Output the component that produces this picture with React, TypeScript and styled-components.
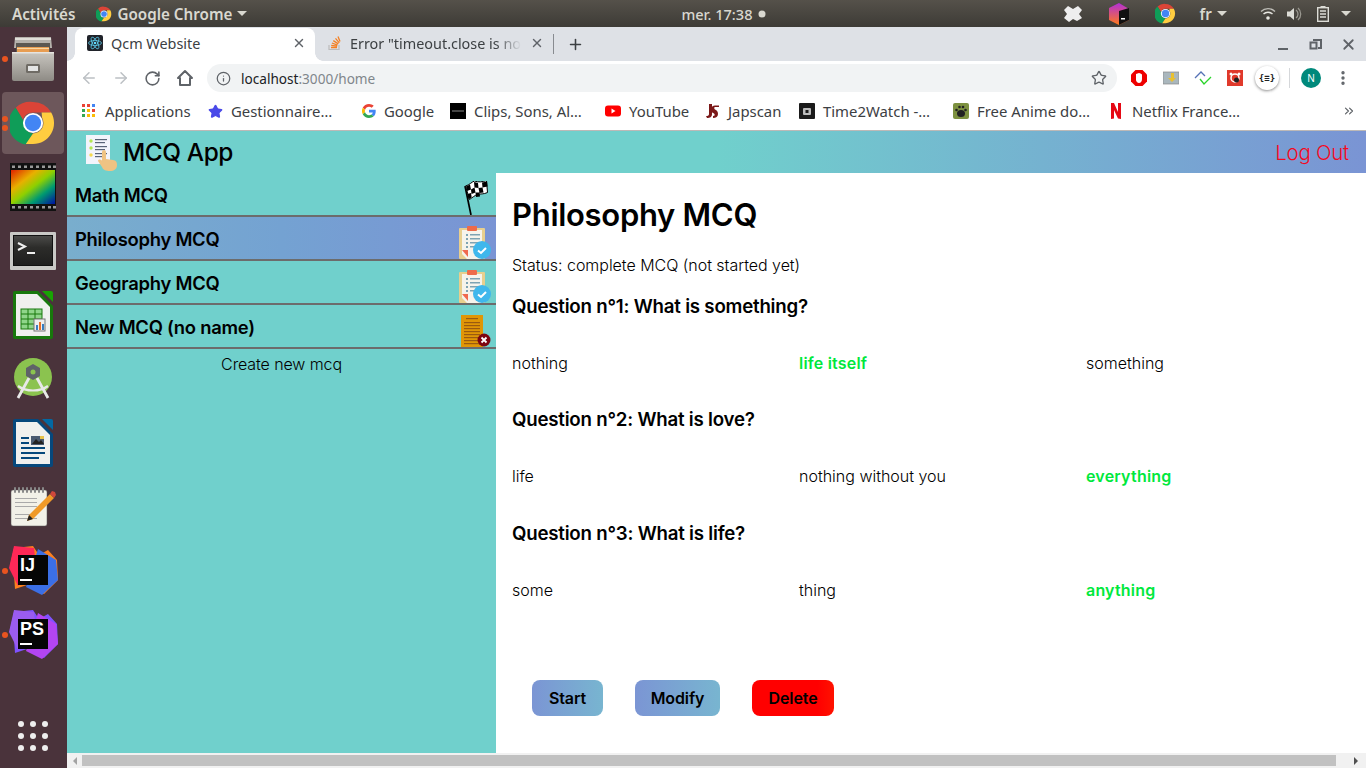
import React from "react";
import styled, { createGlobalStyle } from "styled-components";
import { ArrowLeft, ArrowRight, RotateCw, Info, Star, EllipsisVertical, X, Plus, ChevronsRight } from "lucide-react";

const Global = createGlobalStyle`
  html, body { margin: 0; padding: 0; width: 1366px; height: 768px; overflow: hidden; background: #fff; }
  * { box-sizing: border-box; }
`;
const UI = `"Noto Sans", "Open Sans", sans-serif`;
const APP = `Inter, "Noto Sans", sans-serif`;

const Screen = styled.div`display: flex; flex-direction: column; width: 1366px; height: 768px;`;
const TopBar = styled.header`
  height: 27px; flex: none; display: flex; align-items: center;
  background: linear-gradient(#55514a, #3d3b36);
  color: #d9d8d0; font: 600 15.2px ${UI};
`;
const TopItem = styled.div<{ $x: number }>`margin-left: ${p => p.$x}px; display: flex; align-items: center; gap: 5px; white-space: nowrap;`;
const Clock = styled(TopItem)`font-weight: 500; font-size: 14.6px;`;
const Caret = styled.span`width: 0; height: 0; border-left: 5px solid transparent; border-right: 5px solid transparent; border-top: 5px solid #d9d8d0;`;
const Desktop = styled.div`flex: 1; display: flex; min-height: 0;`;
const Dock = styled.nav`width: 67px; flex: none; background: #4a333b; display: flex; flex-direction: column; padding-bottom: 17px;`;
const DockSlot = styled.div<{ $active?: boolean }>`
  position: relative; height: 64px; flex: none; display: flex; align-items: center; justify-content: center; padding-right: 1px;
  &::before { content: ""; position: absolute; left: 2px; top: 1px; width: 62px; height: 62px; border-radius: 4px; background: ${p => (p.$active ? "#6d575b" : "transparent")}; }
  svg { position: relative; }
`;
const RunDot = styled.i<{ $y: number }>`position: absolute; left: 2px; top: ${p => p.$y}px; width: 6px; height: 6px; border-radius: 50%; background: #e95420;`;
const DockGrid = styled.div`margin-top: auto; margin-left: 18px; width: 30px; display: grid; grid-template-columns: repeat(3, 6px); gap: 6px;`;
const GridDot = styled.i`width: 6px; height: 6px; border-radius: 50%; background: #eee;`;

const Window = styled.div`flex: 1; min-width: 0; display: flex; flex-direction: column;`;
const TabStrip = styled.div`height: 34px; flex: none; background: #dee1e6; display: flex; align-items: flex-end; padding-left: 8px; color: #3c4043; font: 14.4px ${UI};`;
const ActiveTab = styled.div`
  position: relative; width: 240px; height: 33px; background: #fff; border-radius: 8px 8px 0 0; display: flex; align-items: center; padding: 0 9px 3px 12px; gap: 8px;
  &::before, &::after { content: ""; position: absolute; bottom: 0; width: 8px; height: 8px; }
  &::before { left: -8px; background: radial-gradient(circle at 0 0, #dee1e6 7.5px, #fff 8px); }
  &::after { right: -8px; background: radial-gradient(circle at 100% 0, #dee1e6 7.5px, #fff 8px); }
`;
const IdleTab = styled.div`width: 238px; height: 33px; display: flex; align-items: center; padding: 0 9px 3px 12px; gap: 7px;`;
const TabTitle = styled.span<{ $fade?: boolean }>`
  flex: 1; white-space: nowrap; min-width: 0;
  ${p => p.$fade ? "-webkit-mask-image: linear-gradient(90deg,#000 84%,transparent 99%);" : ""}
`;
const TabSep = styled.div`width: 1px; height: 20px; background: #888b90; margin-bottom: 7px;`;
const NewTab = styled.div`margin: 0 0 7px 13px; height: 20px; display: flex; align-items: center;`;
const WinControls = styled.div`margin-left: auto; margin-bottom: 7px; display: flex; gap: 18px; padding-right: 9px; height: 20px; align-items: center;`;
const Toolbar = styled.div`height: 34px; flex: none; background: #fff; display: flex; align-items: center; padding-left: 13px;`;
const NavBtn = styled.span`width: 32px; display: flex; justify-content: flex-start; color: #5f6368;`;
const Omnibox = styled.div`
  width: 910px; height: 28px; margin-left: -1px; border-radius: 14px; background: #f1f3f4; display: flex; align-items: center;
  padding: 0 10px 0 9px; font: 13.6px ${UI}; color: #80868b;
`;
const Host = styled.span`color: #202124;`;
const Url = styled.span`margin-left: 10px; flex: 1;`;
const Extensions = styled.div`display: flex; align-items: center; margin-left: 6px;`;
const ExtSlot = styled.span<{ $gap?: number }>`width: 32px; height: 28px; margin-left: ${p => p.$gap ?? 0}px; display: flex; align-items: center; justify-content: center;`;
const ExtRound = styled.span`width: 24px; height: 24px; border-radius: 50%; background: #fff; box-shadow: 0 1px 3px rgba(0,0,0,.45); display: flex; align-items: center; justify-content: center; font: 700 9px "DejaVu Sans Mono", monospace; color: #222;`;
const ExtSep = styled.span`width: 1px; height: 20px; background: #d5d7da; margin: 0 11px 0 6px;`;
const Avatar = styled.span`width: 20px; height: 20px; border-radius: 50%; background: #00897b; color: #fff; font: 10px ${UI}; display: flex; align-items: center; justify-content: center;`;
const Bookmarks = styled.div`height: 36px; flex: none; background: #fff; border-bottom: 1px solid #bdb9b7; display: flex; align-items: center; padding: 0 0 3px 15px; font: 14.9px ${UI}; color: #3c4043;`;
const Bookmark = styled.div<{ $w: number }>`width: ${p => p.$w}px; flex: none; display: flex; align-items: center; gap: 8px; white-space: nowrap; & > svg { flex: none; }`;
const More = styled.span`margin-left: 86px; display: flex; color: #5f6368;`;

const Page = styled.main`flex: 1; min-height: 0; display: flex; flex-direction: column; font-family: ${APP}; color: #000;`;
const AppHeader = styled.div`height: 42px; flex: none; background: linear-gradient(90deg, #70d0cc 50%, #7a94d4 100%); display: flex; align-items: center; padding: 0 17px 0 18px;`;
const Brand = styled.div`font-size: 24.4px; font-weight: 500; margin-left: 2px; letter-spacing: -.4px;`;
const LogOut = styled.a`margin-left: auto; color: #f5091d; font-size: 20.4px; font-weight: 300; letter-spacing: -.2px;`;
const Body = styled.div`flex: 1; min-height: 0; display: flex;`;
const Sidebar = styled.aside`width: 429px; flex: none; background: #70d0cc; display: flex; flex-direction: column;`;
const Row = styled.div<{ $active?: boolean }>`
  height: 44px; flex: none; border-bottom: 2px solid #6c6c6c; display: flex; align-items: center; justify-content: space-between;
  padding: 2px 5px 0 8px; font-size: 18.4px; font-weight: 600; letter-spacing: -.25px;
  background: ${p => (p.$active ? "linear-gradient(90deg,#79aecd,#74a2d2 50%,#7a94d4)" : "transparent")};
`;
const RowIcon = styled.span<{ $shift?: number }>`display: flex; align-self: flex-end; height: 42px; align-items: flex-end; margin-right: ${p => p.$shift ?? 0}px;`;
const CreateLink = styled.div`text-align: center; font-size: 16px; font-weight: 300; margin-top: 5px; line-height: 20px; letter-spacing: -.1px;`;
const Content = styled.section`flex: 1; min-width: 0; background: #fff; padding: 0 16px;`;
const Title = styled.h1`font-size: 31px; font-weight: 600; margin: 22px 0 0; line-height: 40px; letter-spacing: -.3px;`;
const Status = styled.p`font-size: 16px; font-weight: 300; margin: 20px 0 0; line-height: 20px; letter-spacing: -.03px;`;
const Question = styled.h3<{ $gap: number }>`font-size: 18.7px; font-weight: 600; line-height: 24px; margin: ${p => p.$gap}px 0 0; letter-spacing: -.22px;`;
const Answers = styled.div`display: grid; grid-template-columns: repeat(3, 287px); margin-top: 34px; line-height: 20px;`;
const Answer = styled.span<{ $ok?: boolean }>`
  font-size: 16px; font-weight: ${p => (p.$ok ? 600 : 300)}; color: ${p => (p.$ok ? "#00e83c" : "#000")}; letter-spacing: ${p => (p.$ok ? ".2px" : "0")};
`;
const Actions = styled.div`display: flex; margin: 79.6px 0 0 20px; gap: 32px;`;
const Action = styled.button<{ $w: number; $danger?: boolean }>`
  width: ${p => p.$w}px; height: 36px; border: 0; border-radius: 8px; padding: 0; color: #000;
  font: 600 16px ${APP}; letter-spacing: -.1px;
  background: ${p => (p.$danger ? "linear-gradient(90deg,#f00,#f00 80%,#ff1200)" : "linear-gradient(90deg,#7b95d4,#78b5d0)")};
`;
const ScrollBar = styled.div`height: 15px; flex: none; background: #f1f1f1; display: flex; align-items: center; padding: 0 3px 0 0;`;
const ScrollThumb = styled.div`height: 11px; width: 1254px; background: #c1c1c1; margin-left: 0;`;
const ScrollArrow = styled.span<{ $dir: "l" | "r" }>`
  width: 15px; height: 15px; display: flex; align-items: center; justify-content: center;
  &::after { content: ""; border-top: 4px solid transparent; border-bottom: 4px solid transparent; ${p => (p.$dir === "l" ? "border-right: 4px solid #a3a3a3;" : "border-left: 4px solid #505050;")} }
`;
const ScrollEnd = styled.span`margin-left: auto; display: flex;`;

const Chrome = ({ s }: { s: number }) => (
  <svg width={s} height={s} viewBox="0 0 48 48">
    <path d="M24 2a22 22 0 0 1 19 11H24a11 11 0 0 0-10.5 7.5L6 8A22 22 0 0 1 24 2z" fill="#db4437" />
    <path d="M6 8l8.5 14.5A11 11 0 0 0 24 35l-7.500 11.500A22 22 0 0 1 6 8z" fill="#0f9d58" />
    <path d="M43 13a22 22 0 0 1-19 33h-7.500L24 35a11 11 0 0 0 9.500-16.500L33 13z" fill="#ffcd40" />
    <circle cx="24" cy="24" r="10.500" fill="#fff" /><circle cx="24" cy="24" r="8.500" fill="#4285f4" />
  </svg>
);
const Cabinet = () => (
  <svg width="42" height="44" viewBox="0 0 42 44">
    <defs><linearGradient id="cab" x1="0" y1="0" x2="0" y2="1"><stop offset="0" stopColor="#c9c6c0" /><stop offset="1" stopColor="#8e8b85" /></linearGradient></defs>
    <path d="M3 0h36l1 11H2z" fill="#b5b2ac" /><rect x="3" y="1" width="36" height="2" fill="#e0ded9" />
    <rect x="4" y="6" width="34" height="10" fill="#5b5852" />
    <rect x="5" y="10" width="32" height="5" fill="#e89d52" /><rect x="5" y="11" width="32" height="1" fill="#f7d7a2" />
    <path d="M0 15h42v27a2 2 0 0 1-2 2H2a2 2 0 0 1-2-2z" fill="url(#cab)" />
    <rect y="15" width="42" height="1.500" fill="#e6e4e0" />
    <rect x="14" y="27" width="14" height="9" rx="1.500" fill="#6f6b65" /><rect x="16" y="29" width="10" height="5" fill="#e4e4e4" />
  </svg>
);
const Film = () => (
  <svg width="46" height="48" viewBox="0 0 46 48">
    <defs><linearGradient id="rb" x1="0" y1="0" x2="1" y2="1">
      <stop offset="0" stopColor="#e02000" /><stop offset=".3" stopColor="#e8b000" /><stop offset=".5" stopColor="#8fd000" /><stop offset=".72" stopColor="#009a70" /><stop offset="1" stopColor="#0010a0" />
    </linearGradient></defs>
    <rect width="46" height="48" fill="#111" /><rect x="1" y="7" width="44" height="34" fill="url(#rb)" />
    {[2, 8, 14, 20, 26, 32, 38, 43].map(x => <React.Fragment key={x}><rect x={x} y="2.500" width="3" height="2.500" fill="#999" /><rect x={x} y="43" width="3" height="2.500" fill="#999" /></React.Fragment>)}
  </svg>
);
const Terminal = () => (
  <svg width="46" height="38" viewBox="0 0 46 38">
    <defs><linearGradient id="trm" x1="0" y1="0" x2="0" y2="1"><stop offset="0" stopColor="#4a4a48" /><stop offset=".4" stopColor="#2c2c2a" /><stop offset="1" stopColor="#1f1f1e" /></linearGradient></defs>
    <rect width="46" height="38" rx="1" fill="#c9c9c6" /><rect x="3" y="3" width="40" height="31" fill="#111" /><rect x="4" y="4" width="38" height="29" fill="url(#trm)" />
    <path d="M8 11l7 3.500-7 3.500" fill="none" stroke="#eee" strokeWidth="2" /><rect x="17" y="20" width="8" height="2" fill="#eee" />
  </svg>
);
const OfficeDoc = ({ a, b, children }: { a: string; b: string; children: React.ReactNode }) => (
  <svg width="40" height="48" viewBox="0 0 40 48">
    <path d="M2 0h23l15 15v31a2 2 0 0 1-2 2H2a2 2 0 0 1-2-2V2a2 2 0 0 1 2-2z" fill={a} />
    <path d="M29 0h9a2 2 0 0 1 2 2v9z" fill={b} />
    <path d="M3 3h21l13 13v29H3z" fill="#f0f0ee" />
    {children}
  </svg>
);
const Calc = () => (
  <OfficeDoc a="#18780c" b="#18a303">
    <rect x="8" y="18" width="21" height="20" fill="#8fd58a" stroke="#18780c" />
    <path d="M8 23h21M8 28h21M8 33h21M15 18v20M22 18v20" stroke="#18780c" /><rect x="21" y="28" width="11" height="12" fill="#eee" stroke="#777" />
    <rect x="23" y="34" width="2" height="5" fill="#3a7dc0" /><rect x="26" y="31" width="2" height="8" fill="#e8702a" /><rect x="29" y="33" width="2" height="6" fill="#3a7dc0" />
  </OfficeDoc>
);
const Writer = () => (
  <OfficeDoc a="#06487c" b="#0369a3">
    <rect x="8" y="18" width="8" height="2" fill="#06487c" /><rect x="8" y="23" width="8" height="2" fill="#06487c" /><rect x="8" y="28" width="24" height="2" fill="#06487c" /><rect x="8" y="33" width="24" height="2" fill="#06487c" /><rect x="8" y="38" width="18" height="2" fill="#06487c" />
    <rect x="18" y="17" width="13" height="9" fill="#4a5a70" /><path d="M19 25l4-5 3 3 2-2 3 4z" fill="#222" /><rect x="27" y="17" width="4" height="3" fill="#e8c24a" />
  </OfficeDoc>
);
const Android = () => (
  <svg width="40" height="42" viewBox="0 0 40 42">
    <circle cx="20" cy="19" r="19" fill="#8bc34f" />
    <path d="M20 6l7 4v8l-7 4-7-4v-8z" fill="#5f6368" /><circle cx="20" cy="14" r="2.500" fill="#8bc34f" />
    <path d="M16 20L5 40M24 20l11 20" stroke="#e8e8e8" strokeWidth="2.800" />
    <path d="M5 28c8 6 22 6 30 0" fill="none" stroke="#e8e8e8" strokeWidth="2.200" />
  </svg>
);
const Gedit = () => (
  <svg width="46" height="40" viewBox="0 0 46 40">
    <rect x="1" y="3" width="36" height="36" rx="2" fill="#f2f1e8" stroke="#555" strokeWidth=".5" />
    {[4, 8, 12, 16, 20, 24, 28, 32].map(x => <rect key={x} x={x} y="0" width="2" height="6" rx="1" fill="#888" />)}
    {[11, 15, 19, 27, 31].map(y => <rect key={y} x="5" y={y} width="22" height="1" fill="#aaa" />)}
    <path d="M19 28L40 7l4 4-21 21-6 2z" fill="#f09a28" /><path d="M40 7l2-3 3 1 1 3-2 3z" fill="#d0483c" /><path d="M17 34l2-6 4 4z" fill="#222" />
  </svg>
);
const Jet = ({ code, c1, c2, c3 }: { code: string; c1: string; c2: string; c3: string }) => (
  <svg width="50" height="50" viewBox="0 0 50 50">
    <path d="M6 2l19-2 6 9 9-5 9 10 1 20-14 14-17-9-12 4-1-14L2 20z" fill={c2} />
    <path d="M6 0l20 2 2 18-18 20L1 22z" fill={c1} />
    <path d="M30 3l18 11 2 20-16 15-16-8z" fill={c3} />
    <rect x="10" y="9" width="30" height="30" fill="#050505" />
    <text x="12" y="25" fill="#fff" fontFamily="Liberation Sans" fontWeight="700" fontSize="18">{code}</text>
    <rect x="12" y="33" width="12" height="2" fill="#fff" />
  </svg>
);

const ReactIco = () => (
  <svg width="16" height="16" viewBox="0 0 16 16"><rect width="16" height="16" rx="2" fill="#20232a" />
    <g fill="none" stroke="#61dafb" strokeWidth=".7"><ellipse cx="8" cy="8" rx="6.500" ry="2.500" /><ellipse cx="8" cy="8" rx="6.500" ry="2.500" transform="rotate(60 8 8)" /><ellipse cx="8" cy="8" rx="6.500" ry="2.500" transform="rotate(120 8 8)" /></g>
    <circle cx="8" cy="8" r="1.300" fill="#61dafb" /></svg>
);
const SO = () => (
  <svg width="16" height="16" viewBox="0 0 16 16"><path d="M2 10v4.500h10V10" fill="none" stroke="#bcbbbb" strokeWidth="1.200" />
    <path d="M4 12.500h6M4.200 10.400l6 .8M4.900 8l5.600 2.200M6.300 5.600l5 3.300M8.500 3.400l3.800 4.400M11 1.500l2 5" stroke="#f48024" strokeWidth="1.300" fill="none" /></svg>
);
const Apps = () => (
  <svg width="15" height="14" viewBox="0 0 15 14">
    {["#ea4335","#ea4335","#4285f4","#34a853","#fbbc05","#ea4335","#34a853","#fbbc05","#fbbc05"].map((c, i) => <rect key={i} x={(i % 3) * 5} y={Math.floor(i / 3) * 5} width="3" height="3" fill={c} />)}
  </svg>
);
const GLogo = () => (
  <svg width="14" height="14" viewBox="0 0 48 48"><path fill="#ea4335" d="M24 9.500c3.500 0 6.700 1.200 9.200 3.600l6.900-6.900C35.900 2.400 30.500 0 24 0 14.600 0 6.500 5.400 2.600 13.200l8 6.200C12.500 13.700 17.800 9.500 24 9.500z" /><path fill="#4285f4" d="M47 24.500c0-1.600-.2-3.100-.4-4.500H24v9h13c-.6 3-2.200 5.500-4.800 7.200l7.700 6C44.400 38 47 31.800 47 24.500z" /><path fill="#fbbc05" d="M10.600 28.600A14.500 14.500 0 0 1 10.600 19.400l-8-6.200a24 24 0 0 0 0 21.600z" /><path fill="#34a853" d="M24 48c6.500 0 11.900-2.100 15.900-5.800l-7.700-6c-2.200 1.400-4.900 2.300-8.200 2.300-6.200 0-11.500-4.200-13.400-9.900l-8 6.200C6.500 42.600 14.600 48 24 48z" /></svg>
);
const ClipsIco = () => <svg width="16" height="16" viewBox="0 0 16 16"><rect width="16" height="16" fill="#000" /><rect x="2" y="7.500" width="12" height="1" fill="#888" /></svg>;
const YT = () => <svg width="16" height="16" viewBox="0 0 16 16"><rect y="2.500" width="16" height="11" rx="3" fill="#f00" /><path d="M6.500 5.500l4 2.500-4 2.500z" fill="#fff" /></svg>;
const Jap = () => <svg width="16" height="16" viewBox="0 0 16 16"><path d="M5 1h3v10c0 3-2 4-5 4l-1-2c2 0 3-.5 3-2zM15 4h-4c-1 0-1 2 0 2.500 2 1 3 2 3 4.500s-2 4-5 4v-2c2 0 2-1.500 1-2.500-2-1-3-2-3-4 0-3 2-4 4-4h4z" fill="#7b1818" /></svg>;
const T2W = () => <svg width="16" height="16" viewBox="0 0 16 16"><rect width="16" height="16" rx="1" fill="#1a1a1a" /><rect x="4" y="5" width="8" height="7" rx="1" fill="#bbb" /><rect x="6.500" y="7" width="3" height="3" fill="#1a1a1a" /></svg>;
const Paw = () => <svg width="16" height="16" viewBox="0 0 16 16"><rect width="16" height="16" rx="2" fill="#7d9140" /><ellipse cx="8" cy="10.500" rx="4" ry="3.500" fill="#222" /><circle cx="3.500" cy="7" r="1.300" fill="#222" /><circle cx="6.500" cy="4" r="1.300" fill="#222" /><circle cx="10" cy="4" r="1.300" fill="#222" /><circle cx="12.500" cy="7" r="1.300" fill="#222" /></svg>;
const Netflix = () => <svg width="16" height="16" viewBox="0 0 16 16"><path d="M3 0h3l4 9V0h3v16l-3-.4L6 7v8.400L3 16z" fill="#e50914" /></svg>;

const HomeIco = () => <svg width="18" height="18" viewBox="0 0 18 18"><path d="M9 2L2 9h2v7h10V9h2z" fill="none" stroke="#5f6368" strokeWidth="2" strokeLinejoin="round" /></svg>;
const Restore = () => <svg width="13" height="16" viewBox="0 0 13 16"><path d="M4 4h8v8h-3" fill="none" stroke="#5f6368" strokeWidth="2" /><rect x="1.500" y="6.500" width="6" height="6" fill="none" stroke="#5f6368" strokeWidth="2" /></svg>;
const Minimize = () => <svg width="16" height="16" viewBox="0 0 16 16"><rect x="3" y="12" width="10" height="2" fill="#5f6368" /></svg>;
const AdBlock = () => <svg width="18" height="18" viewBox="0 0 18 18"><path d="M5.500 1h7L17 5.500v7L12.500 17h-7L1 12.500v-7z" fill="#e00" /><path d="M6 8V5l1.500-.5L9 4l1.500.5 1.500 1V10c0 2.500-1.500 4-3 4s-3-1.500-3-3z" fill="#fff" /></svg>;
const PicExt = () => <svg width="16" height="14" viewBox="0 0 16 14"><rect width="16" height="12" y="1" fill="#aab7bd" stroke="#888" strokeWidth=".7" /><path d="M8 2v5H5l4 4 4-4h-2V2z" fill="#e8c030" /></svg>;
const Chevs = () => <svg width="18" height="16" viewBox="0 0 18 16"><path d="M1 8l6-6 4 4" fill="none" stroke="#5572b5" strokeWidth="1.300" /><path d="M6 9l4 5 7-7" fill="none" stroke="#2bd42b" strokeWidth="1.300" /></svg>;
const RedExt = () => <svg width="16" height="16" viewBox="0 0 16 16"><rect width="16" height="16" fill="#e0392b" /><circle cx="8" cy="8" r="4" fill="none" stroke="#fff" strokeWidth="1.500" /><circle cx="4" cy="4" r="1.500" fill="#fff" /><circle cx="12" cy="4" r="1.500" fill="#fff" /><circle cx="9.500" cy="10" r="2.500" fill="#222" /></svg>;

const TrayX = () => <svg width="18" height="16" viewBox="0 0 18 16"><path d="M4 0l5 3 5-3 4 4-3 4 3 4-5 3-4-2-4 3-5-4 3-4-3-4z" fill="#eee" /></svg>;
const TrayBox = () => <svg width="20" height="22" viewBox="0 0 20 22"><defs><linearGradient id="tb" x1="0" y1="0" x2="0" y2="1"><stop offset="0" stopColor="#b22fd8" /><stop offset="1" stopColor="#ff7a1a" /></linearGradient></defs><path d="M10 0l10 6v11l-10 5-10-5V5z" fill="url(#tb)" /><path d="M10 8l10-3v12l-10 5z" fill="#111" /><rect x="12" y="15" width="4" height="1.500" fill="#fff" /></svg>;
const Wifi = () => <svg width="16" height="14" viewBox="0 0 16 14" fill="none" stroke="#bdbcb6" strokeWidth="1.400"><path d="M1 4.500a10 10 0 0 1 14 0" /><path d="M3.500 7a6.500 6.500 0 0 1 9 0" stroke="#e8e8e2" /><circle cx="8" cy="11" r="1.800" fill="#e8e8e2" stroke="none" /></svg>;
const Volume = () => <svg width="16" height="14" viewBox="0 0 16 14"><path d="M0 4.500h3l4-3.500v12l-4-3.500H0z" fill="#dcdcd6" /><path d="M9 3a5 5 0 0 1 0 8M11 1a8 8 0 0 1 0 12" fill="none" stroke="#99978f" strokeWidth="1.300" /></svg>;
const Battery = () => <svg width="12" height="16" viewBox="0 0 12 16"><rect x="3.500" y="0" width="5" height="2" fill="#dcdcd6" /><rect x=".7" y="1.700" width="10.600" height="13.600" fill="none" stroke="#dcdcd6" strokeWidth="1.400" /><path d="M3 5h6M3 8h6M3 11h6" stroke="#dcdcd6" strokeWidth="1.500" /></svg>;

const AppLogo = () => (
  <svg width="36" height="38" viewBox="0 0 36 38">
    <rect x="1" y="2" width="24" height="29" fill="#f3f4fb" />
    <circle cx="6" cy="8" r="1.700" fill="#b5e853" /><circle cx="6" cy="15" r="1.700" fill="#b5e853" /><circle cx="6" cy="22" r="1.700" fill="#f4d94f" />
    {[6, 9, 13, 16, 20, 23].map((y, i) => <rect key={y} x="10" y={y} width={i % 2 ? 10 : 12} height="1.200" fill="#5a6478" />)}
    <path d="M17 19a2 2 0 0 1 4 0v7l7 1c3 .5 4 2 4 5 0 4-3 6-7 6s-7-1-8-4l-4-6c0-1.500 2-2 4-.5z" fill="#efc383" />
  </svg>
);
const FlagIco = () => (
  <svg width="24" height="34" viewBox="0 0 24 34">
    <path d="M1 5l6 29" stroke="#000" strokeWidth="1.700" />
    <path d="M1.500 5c4-1 6-4 9-5 4 1.500 8 1 12-.5l1 12c-4 2-7 1-10 2-3 1-5 3-8 5z" fill="#fff" stroke="#000" strokeWidth="1" />
    <path d="M2 5.500l4-2 1 5-4 1.500zM10 1l4 1 .5 5-4-.5zM18 1.500l5-1 .5 5-5 1zM7 8.500l3.500-2 1 5-4 1.500zM14.500 7l4-.5 1 5-4 .5zM3.500 13l3.500-1 .7 4.500L4.500 18zM11.500 11.500l4 0 .5 4-4 .5z" fill="#000" />
  </svg>
);
const DoneIco = () => (
  <svg width="32" height="33" viewBox="0 0 32 33">
    <rect x="0" y="2" width="26" height="31" rx="1" fill="#e8cf8e" /><path d="M3 4h20v29H8l-5-5z" fill="#f6f3ec" />
    <path d="M3 24h6v7z" fill="#f0694e" />
    <rect x="8" y="0" width="10" height="5" rx="1" fill="#ee6b4a" />
    {[8, 12, 16, 20].map(y => <React.Fragment key={y}><rect x="7" y={y} width="2" height="2" fill="#7ea3b3" /><rect x="11" y={y} width="10" height="1.500" fill="#7ea3b3" /></React.Fragment>)}
    <circle cx="23" cy="24" r="9" fill="#3fb7ec" />
    <path d="M19 24.500l3 2.500 5-5" fill="none" stroke="#fff" strokeWidth="2" />
  </svg>
);
const DraftIco = () => (
  <svg width="31" height="33" viewBox="0 0 31 33">
    <rect x="1" y="1" width="22" height="32" fill="#e09606" />
    {[4, 8, 11, 14, 17, 20, 23, 26, 29].map((y, i) => <rect key={y} x={i === 0 ? 6 : 4} y={y} width={i === 0 ? 12 : 16} height="1.200" fill="#9a5a10" />)}
    <circle cx="24" cy="26" r="6.500" fill="#7d0610" />
    <path d="M21.500 23.500l5 5m0-5l-5 5" stroke="#fff" strokeWidth="1.800" />
  </svg>
);

const items = [
  { name: "Math MCQ", icon: <FlagIco />, shift: 3 },
  { name: "Philosophy MCQ", icon: <DoneIco />, active: true },
  { name: "Geography MCQ", icon: <DoneIco /> },
  { name: "New MCQ (no name)", icon: <DraftIco /> },
];
const questions = [
  { q: "Question n°1: What is something?", a: ["nothing", "life itself", "something"], ok: 1, gap: 20 },
  { q: "Question n°2: What is love?", a: ["life", "nothing without you", "everything"], ok: 2, gap: 35.4 },
  { q: "Question n°3: What is life?", a: ["some", "thing", "anything"], ok: 2, gap: 36 },
];
const marks: [React.ReactNode, string, number][] = [
  [<Star size={15} fill="#4a4ae8" color="#4a4ae8" />, "Gestionnaire…", 154],
  [<GLogo />, "Google", 88],
  [<ClipsIco />, "Clips, Sons, Al…", 155],
  [<YT />, "YouTube", 99],
  [<Jap />, "Japscan", 95],
  [<T2W />, "Time2Watch -…", 154],
  [<Paw />, "Free Anime do…", 155],
  [<Netflix />, "Netflix France…", 148],
];

export default function App() {
  return (
    <Screen>
      <Global />
      <TopBar>
        <TopItem $x={12}>Activités</TopItem>
        <TopItem $x={21}><Chrome s={16} /> Google Chrome <Caret /></TopItem>
        <Clock $x={434}>mer. 17:38 <svg width="8" height="8"><circle cx="4" cy="4" r="3.500" fill="#d9d8d0" /></svg></Clock>
        <TopItem $x={298}><TrayX /></TopItem>
        <TopItem $x={27}><TrayBox /></TopItem>
        <TopItem $x={26}><Chrome s={21} /></TopItem>
        <TopItem $x={24}>fr <Caret /></TopItem>
        <TopItem $x={33}><Wifi /></TopItem>
        <TopItem $x={11}><Volume /></TopItem>
        <TopItem $x={14}><Battery /></TopItem>
        <TopItem $x={12}><Caret /></TopItem>
      </TopBar>
      <Desktop>
        <Dock>
          <DockSlot><RunDot $y={29} /><Cabinet /></DockSlot>
          <DockSlot $active><RunDot $y={25} /><RunDot $y={34} /><Chrome s={46} /></DockSlot>
          <DockSlot><Film /></DockSlot>
          <DockSlot><Terminal /></DockSlot>
          <DockSlot><Calc /></DockSlot>
          <DockSlot><Android /></DockSlot>
          <DockSlot><Writer /></DockSlot>
          <DockSlot><Gedit /></DockSlot>
          <DockSlot><RunDot $y={29} /><Jet code="IJ" c1="#fe2857" c2="#fc801d" c3="#3b6fe6" /></DockSlot>
          <DockSlot><RunDot $y={29} /><Jet code="PS" c1="#9a5cf0" c2="#7f52ff" c3="#b345f1" /></DockSlot>
          <DockGrid>{Array.from({ length: 9 }, (_, i) => <GridDot key={i} />)}</DockGrid>
        </Dock>
        <Window>
          <TabStrip>
            <ActiveTab><ReactIco /><TabTitle>Qcm Website</TabTitle><X size={14} color="#5f6368" strokeWidth={2.500} /></ActiveTab>
            <IdleTab><SO /><TabTitle $fade>Error "timeout.close is no</TabTitle><X size={14} color="#5f6368" strokeWidth={2.500} /></IdleTab>
            <TabSep />
            <NewTab><Plus size={17} color="#3c4043" strokeWidth={2.200} /></NewTab>
            <WinControls><Minimize /><Restore /><X size={17} color="#5f6368" strokeWidth={2.500} /></WinControls>
          </TabStrip>
          <Toolbar>
            <NavBtn><ArrowLeft size={18} color="#bcc0c4" /></NavBtn>
            <NavBtn><ArrowRight size={18} color="#bcc0c4" /></NavBtn>
            <NavBtn><RotateCw size={17} strokeWidth={2.200} /></NavBtn>
            <NavBtn><HomeIco /></NavBtn>
            <Omnibox>
              <Info size={15} color="#5f6368" />
              <Url><Host>localhost</Host>:3000/home</Url>
              <Star size={16} color="#5f6368" strokeWidth={2} />
            </Omnibox>
            <Extensions>
              <ExtSlot><AdBlock /></ExtSlot><ExtSlot><PicExt /></ExtSlot><ExtSlot><Chevs /></ExtSlot><ExtSlot><RedExt /></ExtSlot>
              <ExtSlot><ExtRound>{"{≡}"}</ExtRound></ExtSlot>
              <ExtSep />
              <Avatar>N</Avatar>
              <ExtSlot $gap={6}><EllipsisVertical size={18} color="#5f6368" strokeWidth={2.500} /></ExtSlot>
            </Extensions>
          </Toolbar>
          <Bookmarks>
            <Bookmark $w={126}><Apps /> Applications</Bookmark>
            {marks.map(([ic, t, w]) => <Bookmark key={t} $w={w}>{ic} {t}</Bookmark>)}
            <More><ChevronsRight size={14} /></More>
          </Bookmarks>
          <Page>
            <AppHeader><AppLogo /><Brand>MCQ App</Brand><LogOut>Log Out</LogOut></AppHeader>
            <Body>
              <Sidebar>
                {items.map(i => <Row key={i.name} $active={i.active}>{i.name}<RowIcon $shift={i.shift}>{i.icon}</RowIcon></Row>)}
                <CreateLink>Create new mcq</CreateLink>
              </Sidebar>
              <Content>
                <Title>Philosophy MCQ</Title>
                <Status>Status: complete MCQ (not started yet)</Status>
                {questions.map(q => (
                  <React.Fragment key={q.q}>
                    <Question $gap={q.gap}>{q.q}</Question>
                    <Answers>{q.a.map((a, i) => <Answer key={a} $ok={i === q.ok}>{a}</Answer>)}</Answers>
                  </React.Fragment>
                ))}
                <Actions>
                  <Action $w={71}>Start</Action>
                  <Action $w={85}>Modify</Action>
                  <Action $w={82} $danger>Delete</Action>
                </Actions>
              </Content>
            </Body>
            <ScrollBar>
              <ScrollArrow $dir="l" />
              <ScrollThumb />
              <ScrollEnd><ScrollArrow $dir="r" /></ScrollEnd>
            </ScrollBar>
          </Page>
        </Window>
      </Desktop>
    </Screen>
  );
}
